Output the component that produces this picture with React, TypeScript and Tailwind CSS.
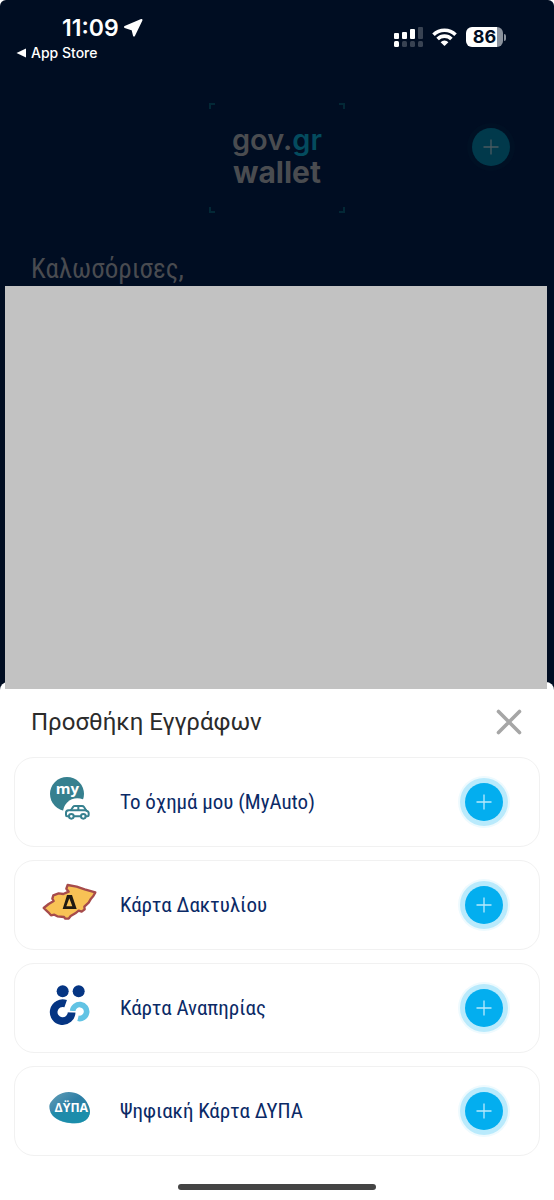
import React from 'react'

const MyAutoIcon: React.FC = () => (
  <svg viewBox="36 30 162 162" className="size-[54px] overflow-visible" aria-hidden="true">
    <circle cx="111" cy="87" r="51" fill="#36808f" />
    <circle cx="142" cy="143" r="43" fill="#ffffff" />
    <text
      x="112"
      y="88"
      textAnchor="middle"
      fontSize="45"
      fontWeight="700"
      fill="#ffffff"
      className="font-['Open_Sans',sans-serif]"
    >
      my
    </text>
    <g fill="none" stroke="#36808f" strokeWidth="6" strokeLinejoin="round" strokeLinecap="round">
      <path d="M116 154h-5q-3 0-3-4v-7q0-6 8-7l7-1 7-10q1-2 5-2h21q4 0 6 3l7 11q7 2 7 7v7q0 3-4 3h-5" />
      <path d="M133 154h20M122 136h46M145 124v12" />
      <circle cx="124" cy="154" r="7" />
      <circle cx="160" cy="154" r="7" />
    </g>
  </svg>
)

const RingCardIcon: React.FC = () => (
  <svg viewBox="36 24 162 162" className="size-[54px] overflow-visible" aria-hidden="true">
    <path
      d="M113 45L140 50 164 58 196 67 190 78 183 86 176 98 163 110 164 118 155 125 146 122 136 130 122 138 116 146 106 146 102 141 82 139 73 134 63 136 55 127 41 114 56 102 71 93 67 86 70 76 86 70 100 72 116 65 109 56z"
      fill="#f8c255"
      stroke="#a64b4b"
      strokeWidth="7"
      strokeLinejoin="round"
    />
    <path d="M111 75h15l14 42h-42z M118 85l-9 24h18z" fill="#1f1a12" fillRule="evenodd" />
  </svg>
)

const DisabilityCardIcon: React.FC = () => (
  <svg viewBox="36 33 162 162" className="size-[54px] overflow-visible" aria-hidden="true">
    <circle cx="98" cy="64" r="18" fill="#053583" />
    <circle cx="146" cy="64" r="18" fill="#053583" />
    <path d="M144 145a21 21 0 1 0-16-22" fill="none" stroke="#62c3e4" strokeWidth="17" />
    <path d="M107 101a27 27 0 1 0 18 26" fill="none" stroke="#053583" strokeWidth="23" />
    <path d="M112 125h27" fill="none" stroke="#ffffff" strokeWidth="3" />
  </svg>
)

const DypaCardIcon: React.FC = () => (
  <svg viewBox="36 27 162 162" className="size-[54px] overflow-visible" aria-hidden="true">
    <defs>
      <linearGradient id="dypa" x1="0" y1="0" x2="1" y2="1">
        <stop offset="0" stopColor="#65a0b8" />
        <stop offset="0.45" stopColor="#2f7fa6" />
        <stop offset="1" stopColor="#1c8ba8" />
      </linearGradient>
    </defs>
    <path
      d="M58 94C58 82 78 60 98 54c16-5 36-3 50 5 18 10 32 34 32 50 0 24-20 36-46 36-34 0-76-14-76-51z"
      fill="url(#dypa)"
    />
    <path d="M61 110q55-10 119 0-4 34-45 35c-32 0-64-10-74-35z" fill="#1592ad" opacity="0.6" />
    <text
      x="124"
      y="111"
      textAnchor="middle"
      fontSize="37"
      fontWeight="700"
      fill="#ffffff"
      className="font-['Open_Sans',sans-serif]"
    >
      ΔΫΠΑ
    </text>
  </svg>
)

const documents = [
  { name: 'Το όχημά μου (MyAuto)', icon: MyAutoIcon },
  { name: 'Κάρτα Δακτυλίου', icon: RingCardIcon },
  { name: 'Κάρτα Αναπηρίας', icon: DisabilityCardIcon },
  { name: 'Ψηφιακή Κάρτα ΔΥΠΑ', icon: DypaCardIcon }
]

const PlusIcon: React.FC = () => (
  <svg viewBox="0 0 16 16" className="size-4" fill="none" stroke="currentColor" strokeWidth="1.3" aria-hidden="true">
    <path d="M8 0.5v15M0.5 8h15" />
  </svg>
)

const StatusBar: React.FC = () => (
  <div className="flex items-center justify-between pt-[13px] pr-12 pl-4 font-['Inter',sans-serif] text-white">
    <div>
      <div className="flex items-center gap-1 pl-[46px] text-[23px] leading-[30px] font-semibold">
        <span>11:09</span>
        <svg viewBox="0 0 20 20" className="size-5" fill="currentColor" stroke="currentColor" strokeWidth="2" strokeLinejoin="round" aria-hidden="true">
          <path d="M18.5 2L11 17.5 9.5 11.5 2 9z" />
        </svg>
      </div>
      <a href="#" className="flex items-center gap-1 text-sm leading-5 font-medium">
        <svg viewBox="0 0 11 10" className="h-[10px] w-[11px]" fill="currentColor" aria-hidden="true">
          <path d="M0.5 5L10 0.5v9z" />
        </svg>
        App Store
      </a>
    </div>

    <div className="flex items-center gap-[9px] pb-[2px]">
      <svg viewBox="0 0 29 20" className="h-5 w-[29px]" fill="currentColor" aria-hidden="true">
        <rect x="0" y="6" width="5" height="6" rx="1" />
        <rect x="8" y="5" width="5" height="7" rx="1" />
        <rect x="16" y="2" width="5" height="10" rx="1" />
        <rect x="24" y="0" width="5" height="12" rx="1" opacity="0.22" />
        <rect x="0" y="14" width="5" height="6" rx="1.5" />
        <rect x="8" y="14" width="5" height="6" rx="1.5" opacity="0.22" />
        <rect x="16" y="14" width="5" height="6" rx="1.5" opacity="0.22" />
        <rect x="24" y="14" width="5" height="6" rx="1.5" opacity="0.22" />
      </svg>
      <svg viewBox="0 0 25 20" className="h-5 w-[25px]" fill="none" stroke="currentColor" strokeWidth="3.6" aria-hidden="true">
        <path d="M1.5 7.8a15.6 15.6 0 0 1 22 0" />
        <path d="M5.6 12a9.8 9.8 0 0 1 13.8 0" />
        <path d="M12.5 19L8.6 15.2a5.6 5.6 0 0 1 7.8 0z" fill="currentColor" stroke="none" />
      </svg>
      <div className="flex items-center gap-px">
        <div className="flex h-5 w-[37px] items-center justify-center rounded-md bg-linear-to-r from-white from-85% to-[#8b929d] to-85% text-lg leading-5 font-bold text-[#000d22]">
          86
        </div>
        <div className="h-[7px] w-[2px] rounded-r-full bg-[#8b929d]" />
      </div>
    </div>
  </div>
)

const Logo: React.FC = () => (
  <div className="relative flex h-[110px] w-[136px] flex-col items-center justify-center pb-1 font-['Inter',sans-serif] leading-8 text-[#4a4c50]">
    <span className="absolute top-0 left-0 size-[6px] border-t-2 border-l-2 border-[#032836]" />
    <span className="absolute top-0 right-0 size-[6px] border-t-2 border-r-2 border-[#032836]" />
    <span className="absolute bottom-0 left-0 size-[6px] border-b-2 border-l-2 border-[#032836]" />
    <span className="absolute right-0 bottom-0 size-[6px] border-r-2 border-b-2 border-[#032836]" />
    <div className="flex text-[29px] leading-8 font-semibold">
      <div>gov.</div>
      <div className="text-[#044b5e]">gr</div>
    </div>
    <div className="text-[30px] leading-8 font-bold">wallet</div>
  </div>
)

const App: React.FC = () => {
  return (
    <div className="min-h-screen bg-white">
      <header className="rounded-t-md bg-[#000d22]">
        <StatusBar />

        <div className="grid grid-cols-[1fr_auto_1fr] pt-10">
          <div />
          <Logo />
          <button
            type="button"
            aria-label="Προσθήκη"
            className="mt-[25px] mr-11 flex size-[38px] items-center justify-center justify-self-end rounded-full bg-[#01394b] text-[#4a5a60] ring-5 ring-[#001024]"
          >
            <PlusIcon />
          </button>
        </div>

        <h1 className="pt-10 pl-[31px] font-['Roboto_Condensed','Roboto',sans-serif] text-[27px] leading-[33px] text-[#494b50]">
          Καλωσόρισες,
        </h1>

        <div className="relative z-10 mr-[7px] ml-[5px] h-[403px] bg-[#c2c2c2]" />
      </header>

      {/* The sheet's rounded corners sit on the dark page */}
      <div className="-mt-[7px] bg-[#000d22]">
        <section className="rounded-t-lg bg-white px-[14px] pb-[11px]">
          <div className="flex items-center justify-between pt-[22px] pr-[18px] pb-[17px] pl-[17px]">
            <h2 className="font-['Roboto',sans-serif] text-2xl leading-9 text-[#2b2b2b]">Προσθήκη Εγγράφων</h2>
            <button type="button" aria-label="Κλείσιμο" className="text-[#a6a6a6]">
              <svg viewBox="0 0 26 26" className="size-[26px]" fill="none" stroke="currentColor" strokeWidth="3.6" strokeLinecap="round" aria-hidden="true">
                <path d="M2.5 2.5l21 21M23.5 2.5l-21 21" />
              </svg>
            </button>
          </div>

          <ul className="flex flex-col gap-[13px]">
            {documents.map(({ name, icon: Icon }) => (
              <li
                key={name}
                className="flex min-h-[90px] items-center rounded-[20px] border border-[#f1f1f1] pr-[31px] pl-[27px]"
              >
                <Icon />
                <span className="ml-6 flex-1 font-['Roboto_Condensed','Roboto',sans-serif] text-[21px] leading-7 text-[#0b2a66]">
                  {name}
                </span>
                <button
                  type="button"
                  aria-label={`Προσθήκη: ${name}`}
                  className="flex size-12 items-center justify-center rounded-full bg-[#b9eafc] ring-2 ring-[#eefafe]"
                >
                  <span className="flex size-[38px] items-center justify-center rounded-full bg-[#03aeef] text-[#b9eafc]">
                    <PlusIcon />
                  </span>
                </button>
              </li>
            ))}
          </ul>

          <div className="mx-auto mt-7 h-[6px] w-[198px] rounded-full bg-[#444444]" />
        </section>
      </div>
    </div>
  )
}

export default App
